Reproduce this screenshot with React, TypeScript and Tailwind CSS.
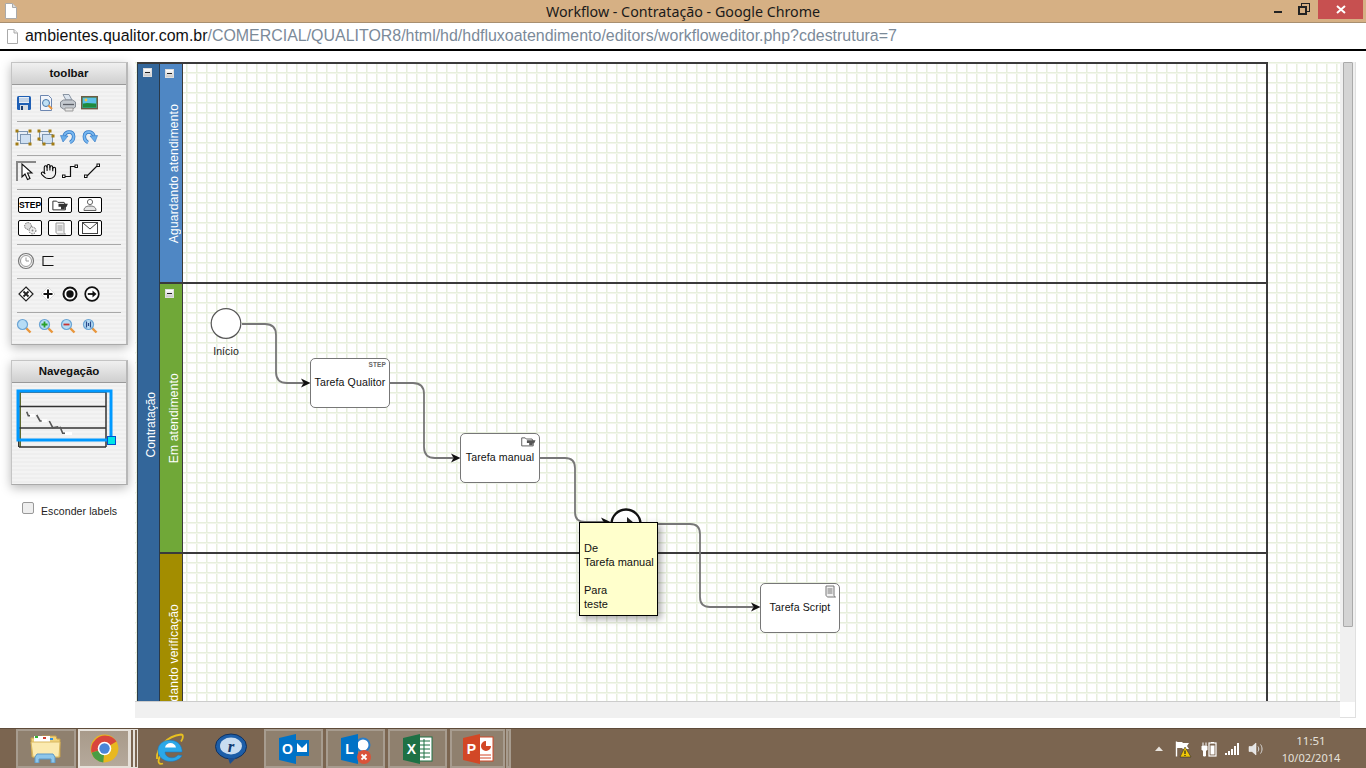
import React from "react";
import { Hand } from "lucide-react";

const SANS = "font-['Liberation_Sans',Arial,sans-serif]";

function Ic({ children, w = 20, h = 20, s = 1 }: { children: React.ReactNode; w?: number; h?: number; s?: number }) {
  return (
    <svg width={w * s} height={h * s} viewBox={`0 0 ${w} ${h}`} className="block shrink-0">
      {children}
    </svg>
  );
}

function Save() {
  return (
    <Ic>
      <rect x="3" y="3" width="14" height="14" rx="1.5" fill="#1f5fb5" />
      <rect x="5" y="4" width="10" height="6" fill="#e8eef5" />
      <path d="M5 6h10M5 8h10" stroke="#9db8d8" />
      <rect x="6" y="12" width="8" height="5" fill="#d5dbe2" />
      <rect x="7" y="13" width="2" height="4" fill="#1c3c6a" />
    </Ic>
  );
}
function Preview() {
  return (
    <Ic>
      <path d="M4.500 2.500h8l3 3v12h-11z" fill="#f2f5fa" stroke="#6c86b0" />
      <circle cx="10" cy="10" r="3.500" fill="#bfe0f4" stroke="#4a78a8" />
      <path d="M12.500 12.500l3.500 3.500" stroke="#e9953c" strokeWidth="2" />
    </Ic>
  );
}
function Printer() {
  return (
    <Ic>
      <path d="M5 1.500h6l3 5.500H8z" fill="#dbe4ee" stroke="#8a95a3" />
      <path d="M2.500 9l3-2h9l3 2v5l-3 2h-9l-3-2z" fill="#c4c9cf" stroke="#858b93" />
      <path d="M5 11.500h11" stroke="#5c6068" strokeWidth="1.300" />
      <path d="M7 15h8v3H7z" fill="#e8e8e8" stroke="#9a9a9a" />
    </Ic>
  );
}
function Picture() {
  return (
    <Ic w={18} h={14} s={1}>
      <rect x="0.700" y="0.700" width="15.600" height="12" fill="#3ab0a0" stroke="#6e5c42" strokeWidth="1.400" />
      <rect x="2" y="2" width="13" height="5" fill="#5cc0e8" />
      <circle cx="5" cy="4" r="1.400" fill="#f4c542" />
      <path d="M2 11.500V8l4-1 9 1v3.500z" fill="#1f8a3c" />
    </Ic>
  );
}
function Squares({ variant }: { variant: 0 | 1 }) {
  const pts =
    variant === 0
      ? [[2, 3], [15, 3], [2, 16], [15, 16]]
      : [[2, 3], [13, 3], [2, 11], [16, 8], [7, 16], [16, 16]];
  return (
    <Ic w={18} h={18}>
      <rect x="2.500" y="3.500" width="10" height="9" fill="#e7edf5" stroke="#7d95b0" />
      <rect x="5.500" y="6.500" width="10" height="9" fill="#cfe0f2" stroke="#7d95b0" />
      {pts.map((p, i) => (
        <rect key={i} x={p[0] - 1.5} y={p[1] - 1.5} width="3" height="3" fill="#a27c14" />
      ))}
    </Ic>
  );
}
function Turn({ flip }: { flip?: boolean }) {
  return (
    <Ic w={16} h={14}>
      <g transform={flip ? "translate(16 0) scale(-1 1)" : undefined}>
        <path d="M10 12.500C15 10 15 2 9 2C6.500 2 5 3.500 4 6" fill="none" stroke="#2f76c4" strokeWidth="3.400" />
        <path d="M10 12.500C15 10 15 2 9 2C6.500 2 5 3.500 4 6" fill="none" stroke="#79b8f0" strokeWidth="2" />
        <path d="M0.500 5.500L8 6L3 12z" fill="#6aaeea" stroke="#2f76c4" strokeWidth="0.600" />
      </g>
    </Ic>
  );
}
function Cursor() {
  return (
    <Ic w={14} h={18}>
      <path d="M2 1v13l3-3 2.500 5.500 2.500-1L7.500 10H12z" fill="#fff" stroke="#111" strokeWidth="1.100" strokeLinejoin="miter" />
    </Ic>
  );
}
function Bent() {
  return (
    <Ic w={16} h={16}>
      <path d="M3 13.500h5.500V3.500H13" fill="none" stroke="#111" strokeWidth="1.200" />
      <rect x="0.500" y="12" width="2.500" height="2.500" fill="#fff" stroke="#111" />
      <rect x="13" y="2" width="2.500" height="2.500" fill="#fff" stroke="#111" />
    </Ic>
  );
}
function Straight() {
  return (
    <Ic w={16} h={16}>
      <path d="M3 13L13 3" stroke="#111" strokeWidth="1.100" />
      <rect x="0.500" y="12" width="2.500" height="2.500" fill="#fff" stroke="#111" />
      <rect x="13" y="1" width="2.500" height="2.500" fill="#fff" stroke="#111" />
    </Ic>
  );
}
function TaskBtn({ children }: { children: React.ReactNode }) {
  return (
    <div className="w-6 h-4 border border-black rounded-[2px] bg-white flex items-center justify-center">{children}</div>
  );
}
function FolderHand({ c = "#333", s = 1 }: { c?: string; s?: number }) {
  return (
    <Ic w={14} h={11} s={s}>
      <path d="M1.500 2.500h3l1 1h5l1 2v4h-10z" fill="#fff" stroke={c} strokeWidth="0.800" />
      <path d="M6 4.500h7.500l-1 2.500-1.500.5V9H8V7H6z" fill={c} />
    </Ic>
  );
}
function Person() {
  return (
    <Ic w={14} h={14}>
      <circle cx="7" cy="4" r="2.600" fill="#fff" stroke="#666" />
      <path d="M1 12.500c0-3 2-4.500 6-4.500s6 1.500 6 4.500z" fill="#e4e4e4" stroke="#666" />
    </Ic>
  );
}
function Gears() {
  return (
    <Ic w={14} h={14}>
      <circle cx="5" cy="5" r="3.400" fill="#ddd" stroke="#666" strokeDasharray="1.500 1" />
      <circle cx="9.500" cy="9.500" r="3.400" fill="#eee" stroke="#666" strokeDasharray="1.500 1" />
      <circle cx="9.500" cy="9.500" r="1" fill="#888" />
    </Ic>
  );
}
function Scroll({ c = "#999" }: { c?: string }) {
  return (
    <Ic w={12} h={13}>
      <path d="M2 1h8v9c0 1 .5 2 1.500 2H4c-1 0-2-1-2-2z" fill="#f2f2f2" stroke={c} />
      <path d="M3.500 4h5M3.500 6h5M3.500 8h5" stroke={c} />
    </Ic>
  );
}
function Mail() {
  return (
    <svg width="16" height="12" viewBox="0 0 16 12" className="block">
      <rect x="0.500" y="0.500" width="15" height="11" fill="#fff" stroke="#444" />
      <path d="M1 1l7 6 7-6" fill="none" stroke="#444" />
    </svg>
  );
}
function Clock() {
  return (
    <Ic w={18} h={18}>
      <circle cx="9" cy="9" r="7.500" fill="#f4f4f4" stroke="#777" strokeWidth="1.200" />
      <circle cx="9" cy="9" r="5.500" fill="#fff" stroke="#999" />
      <path d="M9 5.500V9h3" fill="none" stroke="#999" />
    </Ic>
  );
}
function Bracket() {
  return (
    <Ic w={14} h={12}>
      <path d="M12.500 1.500H2v9h10.500" fill="none" stroke="#111" strokeWidth="1.100" />
    </Ic>
  );
}
function DiamondX() {
  return (
    <Ic w={16} h={16}>
      <path d="M8 1l7 7-7 7-7-7z" fill="#fff" stroke="#222" strokeWidth="1.200" />
      <path d="M5.500 5.500l5 5M10.500 5.500l-5 5" stroke="#222" strokeWidth="1.800" />
    </Ic>
  );
}
function DiamondPlus() {
  return (
    <Ic w={16} h={16}>
      <path d="M8 1l7 7-7 7-7-7z" fill="#fff" stroke="#ddd" />
      <path d="M8 3.500v9M3.500 8h9" stroke="#111" strokeWidth="2" />
    </Ic>
  );
}
function Target() {
  return (
    <Ic w={16} h={16}>
      <circle cx="8" cy="8" r="6.500" fill="#fff" stroke="#111" strokeWidth="2" />
      <circle cx="8" cy="8" r="3.700" fill="#111" />
    </Ic>
  );
}
function ArrowCircle() {
  return (
    <Ic w={16} h={16}>
      <circle cx="8" cy="8" r="6.800" fill="#fff" stroke="#111" strokeWidth="1.700" />
      <path d="M3.800 8h6" stroke="#111" strokeWidth="1.800" />
      <path d="M8.500 4.500L12.500 8l-4 3.500z" fill="#111" />
    </Ic>
  );
}
function Mag({ mark }: { mark?: "plus" | "minus" | "fit" }) {
  return (
    <Ic w={16} h={16}>
      <path d="M9.500 9.500l5 5" stroke="#e8963c" strokeWidth="2.400" />
      <circle cx="6.500" cy="6.500" r="5" fill="#b6dcf5" stroke="#6aa4d4" strokeWidth="1.200" />
      {mark === "plus" && <path d="M6.500 3.500v6M3.500 6.500h6" stroke="#2aa02a" strokeWidth="1.800" />}
      {mark === "minus" && <path d="M3.500 6.500h6" stroke="#c83232" strokeWidth="1.800" />}
      {mark === "fit" && <path d="M4.500 3.500v6M8.500 3.500v6M6.500 5v3" stroke="#2a4a8a" strokeWidth="1.200" />}
    </Ic>
  );
}

function Sep() {
  return <div className="h-px bg-[#a8a8a8] mx-[5px] shrink-0" />;
}
function Row({ children, cls }: { children: React.ReactNode; cls: string }) {
  return <div className={`flex items-center ${cls}`}>{children}</div>;
}
function Cell({ children }: { children: React.ReactNode }) {
  return <div className="w-[22px] h-[22px] flex items-center justify-center shrink-0">{children}</div>;
}

const STRIPES = "bg-[repeating-linear-gradient(#eeeeee_0px,#eeeeee_2px,#f3f3f3_2px,#f3f3f3_4px)]";

function PanelHead({ t }: { t: string }) {
  return (
    <div className="h-[22px] bg-[linear-gradient(#f0f0f0,#cfcfcf)] border-b border-[#999] flex items-center justify-center text-[11.500px] font-bold text-[#111]">
      {t}
    </div>
  );
}

function Toolbar() {
  return (
    <div className={`w-[117px] h-[283px] border-t border-l border-[#c4c4c4] border-r-2 border-r-[#b8b8b8] border-b border-b-[#aaa] shadow-[0_3px_10px_rgba(0,0,0,0.28)] ${STRIPES}`}>
      <PanelHead t="toolbar" />
      <Row cls="h-[36px] pl-[1px]">
        <Cell><Save /></Cell><Cell><Preview /></Cell><Cell><Printer /></Cell><Cell><Picture /></Cell>
      </Row>
      <Sep />
      <Row cls="h-[33px] pl-[1px] pb-[4px]">
        <Cell><Squares variant={0} /></Cell><Cell><Squares variant={1} /></Cell><Cell><Turn /></Cell><Cell><Turn flip /></Cell>
      </Row>
      <Sep />
      <Row cls="h-[33px] pl-[3px] pb-[3px]">
        <div className="w-[20px] h-[20px] ml-[1px] mr-[1px] border-l-2 border-t-2 border-[#888] flex items-center justify-center">
          <Cursor />
        </div>
        <Cell><Hand size={17} strokeWidth={1.500} className="text-black" /></Cell>
        <Cell><Bent /></Cell>
        <Cell><Straight /></Cell>
      </Row>
      <Sep />
      <div className="h-[54px] pl-[6px] pt-[7px] flex flex-col gap-[7px]">
        <div className="flex gap-[6px]">
          <TaskBtn><span className="text-[8.500px] font-bold leading-none text-black">STEP</span></TaskBtn>
          <TaskBtn><FolderHand s={1.250} /></TaskBtn>
          <TaskBtn><Person /></TaskBtn>
        </div>
        <div className="flex gap-[6px]">
          <TaskBtn><Gears /></TaskBtn>
          <TaskBtn><Scroll /></TaskBtn>
          <TaskBtn><Mail /></TaskBtn>
        </div>
      </div>
      <Sep />
      <Row cls="h-[33px] pl-[3px] pb-[2px]">
        <Cell><Clock /></Cell><Cell><Bracket /></Cell>
      </Row>
      <Sep />
      <Row cls="h-[33px] pl-[3px] pb-[3px]">
        <Cell><DiamondX /></Cell><Cell><DiamondPlus /></Cell><Cell><Target /></Cell><Cell><ArrowCircle /></Cell>
      </Row>
      <Sep />
      <Row cls="h-[26px] pl-[1px]">
        <Cell><Mag /></Cell><Cell><Mag mark="plus" /></Cell><Cell><Mag mark="minus" /></Cell><Cell><Mag mark="fit" /></Cell>
      </Row>
    </div>
  );
}

function Mini() {
  return (
    <svg width="104" height="64" viewBox="0 0 104 64" className="block ml-[4px] mt-[6px]">
      <path d="M2 3h1.500v55H2z" fill="#333" />
      <path d="M3.500 3H5v55H3.500z" fill="#5f6b30" />
      <path d="M5 3h85M3 17.500h87M3 39h87M3 58h87M90 3v55" stroke="#333" strokeWidth="1.500" fill="none" />
      <path d="M14 25h5v3h-5zM25.700 30.300h5.600v3h-5.600zM49 43h7v3h-7z" fill="#fff" />
      <path d="M10.700 22.700L12.300 26.700H14M20.700 26L24 32H25.700M33.300 32L36.700 38.700L42.300 37.700M44 37.700L46.700 44.300H49" stroke="#555" strokeWidth="1.600" fill="none" />
      <rect x="2" y="2" width="93" height="49" fill="none" stroke="#0099ff" strokeWidth="3" />
      <rect x="91.500" y="47.500" width="8" height="8" fill="#00e5e5" stroke="#0050d0" />
    </svg>
  );
}

function Navigation() {
  return (
    <div className={`w-[117px] h-[125px] border-t border-l border-[#c4c4c4] border-r-2 border-r-[#b8b8b8] border-b border-b-[#aaa] shadow-[0_3px_10px_rgba(0,0,0,0.28)] ${STRIPES}`}>
      <PanelHead t="Navegação" />
      <Mini />
    </div>
  );
}

function Collapse() {
  return (
    <div className="w-[9px] h-[9px] bg-[linear-gradient(#ffffff,#c8c8c8)] border border-[#ddd] flex items-center justify-center">
      <div className="w-[5px] h-[1.500px] bg-[#222]" />
    </div>
  );
}

function VLabel({ t, cls = "" }: { t: string; cls?: string }) {
  return (
    <span className={`[writing-mode:vertical-rl] rotate-180 text-white text-[12px] leading-none whitespace-nowrap ${cls}`}>{t}</span>
  );
}

function Lane({ t, h, bg, collapse = true }: { t: string; h: string; bg: string; collapse?: boolean }) {
  return (
    <div className="flex shrink-0">
      <div className={`w-[23px] ${h} ${bg} relative flex items-center justify-center border-r border-[#3a3a3a]`}>
        {collapse && <div className="absolute top-[5px] left-[5px]"><Collapse /></div>}
        <VLabel t={t} cls="tracking-[0.2px] ml-[5px] mt-[1px]" />
      </div>
      <div className={`flex-1 ${h}`} />
    </div>
  );
}

function TaskNode({ x, y, t, icon }: { x: number; y: number; t: string; icon: React.ReactNode }) {
  return (
    <div
      className="absolute w-[80px] h-[50px] bg-white border border-[#777] rounded-[5px] flex items-center justify-center text-[10.600px] text-[#111] tracking-[0.1px]"
      style={{ left: x - 135, top: y - 62 }}
    >
      <div className="absolute top-[1px] right-[3px]">{icon}</div>
      {t}
    </div>
  );
}

function Canvas() {
  return (
    <div className="relative w-[1205px] h-[640px] overflow-hidden bg-[linear-gradient(#e7efdc_1px,#f2f6ec_1px,#f2f6ec_2px,transparent_2px),linear-gradient(90deg,#e7efdc_1px,#f2f6ec_1px,#f2f6ec_2px,transparent_2px)] bg-[size:10px_10px] bg-[position:1px_0px] border-b border-b-[#ccc]">
      <div className="absolute left-[2px] top-0 w-[1131px] h-[720px] flex border-2 border-[#3a3a3a] border-l-0 border-b-0">
        <div className="w-[23px] h-[640px] bg-[#33669a] border-l border-r border-[#2a3a4a] relative flex items-center justify-center shrink-0">
          <div className="absolute top-[4px] left-[5px]"><Collapse /></div>
          <VLabel t="Contratação" cls="mt-[82px] ml-[4px]" />
        </div>
        <div className="flex-1 flex flex-col">
          <Lane t="Aguardando atendimento" h="h-[218px]" bg="bg-[#4f87c4]" />
          <div className="h-[2px] bg-[#3a3a3a] shrink-0" />
          <Lane t="Em atendimento" h="h-[268px]" bg="bg-[#70a838]" />
          <div className="h-[2px] bg-[#3a3a3a] shrink-0" />
          <Lane t="Aguardando verificação" h="h-[230px]" bg="bg-[#a38d00]" collapse={false} />
        </div>
      </div>

      <svg width="1205" height="640" viewBox="135 62 1205 640" className="absolute left-0 top-0">
        <g fill="none" stroke="#777" strokeWidth="1.800">
          <path d="M242 324H265Q276 324 276 335V372Q276 383 287 383H303" />
          <path d="M390 383H413Q424 383 424 394V447Q424 458 435 458H453" />
          <path d="M540 458H565Q575 458 575 468V512Q575 522 585 522H603" />
          <path d="M642 524H690Q700 524 700 534V597Q700 607 710 607H753" />
        </g>
        <path d="M301 378.500L310.500 383L301 387.500L303.500 383z" fill="#111" />
        <path d="M451 453.500L460.500 458L451 462.500L453.500 458z" fill="#111" />
        <path d="M601 517.500L610.500 522L601 526.500L603.500 522z" fill="#111" />
        <path d="M751 602.500L760.500 607L751 611.500L753.500 607z" fill="#111" />
        <circle cx="226" cy="323.500" r="14.800" fill="#fff" stroke="#555" strokeWidth="1.200" />
        <circle cx="626" cy="524" r="14.500" fill="#fff" stroke="#111" strokeWidth="2.400" />
        <path d="M627 517L634 523L627 530z" fill="#222" />
      </svg>

      <div className="absolute left-[71px] top-[282px] w-[40px] text-center text-[10.500px] tracking-[0.1px] text-[#222]">Início</div>

      <TaskNode x={310} y={358} t="Tarefa Qualitor" icon={<span className="block text-[6.500px] font-bold text-[#666] leading-[9px]">STEP</span>} />
      <TaskNode x={460} y={433} t="Tarefa manual" icon={<FolderHand c="#555" s={1.150} />} />
      <TaskNode x={760} y={583} t="Tarefa Script" icon={<Scroll c="#777" />} />

      <div className="absolute left-[444px] top-[460px] w-[79px] h-[94px] bg-[#ffffcc] border border-black shadow-[3px_3px_7px_rgba(0,0,0,0.35)] pl-[4px] pt-[4px] text-[11px] leading-[14px] text-[#111]">
        <br />De<br />Tarefa manual<br /><br />Para<br />teste
      </div>
    </div>
  );
}

function ChromeLogo() {
  return (
    <svg width="29" height="29" viewBox="0 0 24 24" className="block">
      <circle cx="12" cy="12" r="11.500" fill="#e8b820" />
      <path d="M12 12L21.900 6.200A11.500 11.500 0 0 0 1.300 15.500z" fill="#d9463c" />
      <path d="M12 12L1.300 15.500A11.500 11.500 0 0 0 11 23.500z" fill="#4a9c44" />
      <circle cx="12" cy="12" r="5.600" fill="#fff" />
      <circle cx="12" cy="12" r="4.300" fill="#4a85d8" />
    </svg>
  );
}
function Folder() {
  return (
    <svg width="32" height="29" viewBox="0 0 32 29" className="block">
      <path d="M1 4h9l2-2h14l1 3h3v18H2z" fill="#f0d27a" stroke="#c7a04a" />
      <path d="M4 2h16v6H4z" fill="#fff" />
      <rect x="5" y="2" width="3" height="2" fill="#30b030" />
      <rect x="13" y="3" width="3" height="2" fill="#d04030" />
      <rect x="20" y="4" width="3" height="2" fill="#3090e0" />
      <path d="M1 8h29l-1 15H3z" fill="#fbeab0" stroke="#d9b860" />
      <path d="M5 29v-6l2-3h16l2 3v6h-4v-4H9v4z" fill="#8ec6ea" stroke="#5a98c8" />
    </svg>
  );
}
function IE() {
  return (
    <svg width="32" height="32" viewBox="0 0 32 32" className="block">
      <path d="M4 26C3 15 14 3 28 1.500c2.500 0 2.500 3.500 0 7" fill="none" stroke="#e8c020" strokeWidth="1.800" />
      <path d="M7 23c-3 6-1 9 3 7.500" fill="none" stroke="#e8c020" strokeWidth="1.800" />
      <path d="M29 19H12c0 6 9 8 13 3l4 .5C25 31 5 31 5 17C5 5 27 3 29 17z" fill="#2ba8e8" stroke="#1b78c4" strokeWidth="0.600" />
      <path d="M12 14.500h11c-1-6-10-6-11 0z" fill="#fff" />
    </svg>
  );
}
function Real() {
  return (
    <svg width="32" height="32" viewBox="0 0 32 32" className="block">
      <ellipse cx="16" cy="13.500" rx="15.500" ry="12.500" fill="#1d5ea8" stroke="#0f3160" />
      <path d="M13 25l2 6 6-6z" fill="#1d4f90" />
      <ellipse cx="16" cy="13" rx="11" ry="8.500" fill="#c8dcf0" />
      <text x="16" y="19" textAnchor="middle" fontSize="17" fontWeight="700" fontStyle="italic" fill="#123a70" fontFamily="Liberation Serif, serif">r</text>
    </svg>
  );
}
function Office({ letter, c, kind }: { letter: string; c: string; kind: "o" | "l" | "x" | "p" }) {
  return (
    <svg width="32" height="32" viewBox="0 0 32 32" className="block">
      {kind === "o" && (
        <g>
          <rect x="17" y="7" width="14" height="16" fill="#0072c6" />
          <path d="M19 10h10v9H19z" fill="#fff" />
          <path d="M19 10l5 5 5-5" fill="#0072c6" />
        </g>
      )}
      {kind === "l" && (
        <g>
          <circle cx="23" cy="12" r="6.500" fill="#fff" stroke="#2a7dc8" strokeWidth="2" />
        </g>
      )}
      {kind === "x" && (
        <g>
          <rect x="16" y="4" width="14" height="24" fill="#fff" stroke="#1e7145" />
          <path d="M18 8h10M18 12h10M18 16h10M18 20h10M18 24h10M22 6v20" stroke="#1e7145" />
        </g>
      )}
      {kind === "p" && (
        <g>
          <rect x="16" y="4" width="15" height="24" fill="#fff" stroke="#d24726" />
          <path d="M24 8a5 5 0 1 0 5 5h-5z" fill="#d24726" />
          <path d="M18 22h11M18 25h11" stroke="#d24726" />
        </g>
      )}
      <path d="M1 5L18 1V31L1 27z" fill={c} />
      <text x="9.500" y="21" textAnchor="middle" fontSize="14" fontWeight="700" fill="#fff" fontFamily="Liberation Sans, sans-serif">{letter}</text>
      {kind === "l" && (
        <g>
          <circle cx="24" cy="24" r="7" fill="#d9533a" />
          <path d="M21.500 21.500l5 5M26.500 21.500l-5 5" stroke="#fff" strokeWidth="1.800" />
        </g>
      )}
    </svg>
  );
}

function TbBtn({ children, w, ml = "" }: { children: React.ReactNode; w: string; ml?: string }) {
  return (
    <div className={`h-[39px] ${w} ${ml} border-2 border-[#a79c8f] bg-[#8f806e] flex items-center justify-center shrink-0`}>{children}</div>
  );
}

function Tray() {
  return (
    <div className="flex items-center ml-auto">
      <svg width="10" height="6" viewBox="0 0 10 6" className="block mr-[10px]"><path d="M5 0.500L9 5H1z" fill="#e8e4de" /></svg>
      <svg width="18" height="18" viewBox="0 0 18 18" className="block mr-[9px]">
        <path d="M2.500 1.500v15" stroke="#fff" strokeWidth="1.400" />
        <path d="M3 2h5l1 1h6l-2 3 2 3H9L8 8H3z" fill="#fff" />
        <path d="M11 7l6 10H6z" fill="#f0c808" stroke="#222" strokeWidth="0.500" />
        <path d="M11 10.500v3.500M11 15v1" stroke="#222" strokeWidth="1.200" />
      </svg>
      <svg width="16" height="16" viewBox="0 0 16 16" className="block mr-[7px]">
        <path d="M1 5h5v4H4.500v6h-2V9H1zM2 1.500v3M5 1.500v3" stroke="#fff" fill="#fff" strokeWidth="1" />
        <rect x="8" y="2" width="7" height="13" fill="none" stroke="#fff" strokeWidth="1.200" />
        <rect x="9.500" y="4.500" width="4" height="9" fill="#fff" />
        <rect x="10" y="1" width="3" height="1" fill="#fff" />
      </svg>
      <svg width="16" height="12" viewBox="0 0 16 12" className="block mr-[8px]">
        <path d="M1 10h2v2H1zM4 8h2v4H4zM7 6h2v6H7zM10 3h2v9h-2zM13 0h2v12h-2z" fill="#fff" />
      </svg>
      <svg width="16" height="14" viewBox="0 0 16 14" className="block mr-[17px]">
        <path d="M1 4.500h3L8 1v12L4 9.500H1z" fill="#e4e4e4" stroke="#fff" strokeWidth="0.500" />
        <path d="M10 4.500c1 1.500 1 3.500 0 5M12.500 2.500c2 2.500 2 6.500 0 9" stroke="#ddd" fill="none" />
      </svg>
      <div className="w-[60px] mr-[25px] text-center text-[11.500px] leading-[17px] text-[#e6e2dc] font-['Noto_Sans',sans-serif]">
        <div>11:51</div>
        <div className="text-[11px] whitespace-nowrap">10/02/2014</div>
      </div>
    </div>
  );
}

export default function App() {
  return (
    <div className={`w-[1366px] h-[768px] flex flex-col bg-white overflow-hidden ${SANS}`}>
      <div className="h-[23px] shrink-0 bg-[#d6b084] border-b border-[#a88f70] flex items-start">
        <div className="flex-1 basis-0">
          <svg width="14" height="16" viewBox="0 0 14 16" className="block ml-[4px] mt-[3px]">
            <path d="M1.500 .500h7l4 4v11h-11z" fill="#fff" stroke="#aaa" />
            <path d="M8.500 .500v4h4" fill="#ddd" stroke="#aaa" />
          </svg>
        </div>
        <div className="text-center text-[14.250px] leading-[24px] text-[#1a1a1a] font-['Noto_Sans',sans-serif] whitespace-nowrap">
          Workflow - Contratação - Google Chrome
        </div>
        <div className="flex-1 basis-0 flex justify-end">
          <div className="w-[8px] h-[2px] bg-[#222] mt-[11px]" />
          <div className="relative w-[12px] h-[12px] ml-[16px] mt-[3px]">
            <div className="absolute right-0 top-0 w-[9px] h-[9px] border border-[#222]" />
            <div className="absolute left-0 bottom-0 w-[9px] h-[9px] border-2 border-[#222] bg-[#d6b084]" />
          </div>
          <div className="w-[45px] h-[19px] bg-[#c75050] ml-[8px] mr-[3px] flex items-center justify-center">
            <svg width="10" height="9" viewBox="0 0 10 9"><path d="M1 1l8 7M9 1L1 8" stroke="#fff" strokeWidth="2" /></svg>
          </div>
        </div>
      </div>

      <div className="h-[28px] shrink-0 bg-white border-b-2 border-b-black flex items-center">
        <svg width="13" height="17" viewBox="0 0 13 17" className="block ml-[6px] mr-[6px]">
          <path d="M1.500 1.500h6.500l3.500 3.500v10.500h-10z" fill="#fff" stroke="#aaa" />
          <path d="M8 1.500v3.500h3.500" fill="#eee" stroke="#aaa" />
        </svg>
        <div className="text-[15.950px] leading-none whitespace-nowrap text-[#111]">
          ambientes.qualitor.com.br<span className="text-[#7b8a99]">/COMERCIAL/QUALITOR8/html/hd/hdfluxoatendimento/editors/workfloweditor.php?cdestrutura=7</span>
        </div>
      </div>

      <div className="flex-1 flex min-h-0">
        <div className="w-[135px] shrink-0 pl-[11px] pt-[11px]">
          <Toolbar />
          <div className="mt-[15px]"><Navigation /></div>
          <div className="flex items-start mt-[17px] ml-[11px]">
            <div className="w-[12px] h-[12px] rounded-[2px] border border-[#999] bg-[#eee] shrink-0" />
            <span className="ml-[7px] mt-[3px] text-[10.500px] leading-[12px] tracking-[0.1px] text-[#222]">Esconder labels</span>
          </div>
        </div>
        <div className="pt-[11px] flex flex-col">
          <div className="flex">
            <Canvas />
            <div className="w-[16px] h-[640px] bg-[#f0f0f0] border-r border-[#e0e0e0] pl-[3px]">
              <div className="w-[10px] h-[565px] bg-[#d4d4d4] border border-[#aaa] rounded-[1px]" />
            </div>
          </div>
          <div className="flex h-[16px]">
            <div className="w-[1205px] bg-[#f0f0f0]" />
            <div className="w-[16px] bg-white border-r border-b border-[#e0e0e0]" />
          </div>
        </div>
      </div>

      <div className="h-[40px] shrink-0 bg-[#7b6550] border-t border-t-[#5f4c3a] flex items-center pl-[16px]">
        <TbBtn w="w-[60px]"><Folder /></TbBtn>
        <div className="relative ml-[2px] flex shrink-0">
          <div className="h-[39px] w-[52px] border-2 border-[#e6e1da] bg-[linear-gradient(#a89a8a,#b5a99b)] flex items-center justify-center"><ChromeLogo /></div>
          <div className="h-[39px] w-[4px] border border-[#e6e1da]" />
          <div className="h-[39px] w-[4px] border border-[#e6e1da]" />
        </div>
        <div className="w-[32px] ml-[15px]"><IE /></div>
        <div className="w-[32px] ml-[30px]"><Real /></div>
        <TbBtn w="w-[59px]" ml="ml-[17px]"><Office letter="O" c="#0072c6" kind="o" /></TbBtn>
        <TbBtn w="w-[59px]" ml="ml-[3px]"><Office letter="L" c="#0072c6" kind="l" /></TbBtn>
        <TbBtn w="w-[59px]" ml="ml-[3px]"><Office letter="X" c="#1e7145" kind="x" /></TbBtn>
        <TbBtn w="w-[55px]" ml="ml-[3px]"><Office letter="P" c="#d24726" kind="p" /></TbBtn>
        <div className="h-[39px] w-[5px] border-2 border-[#a79c8f] bg-[#8f806e] ml-[1px]" />
        <Tray />
      </div>
    </div>
  );
}
